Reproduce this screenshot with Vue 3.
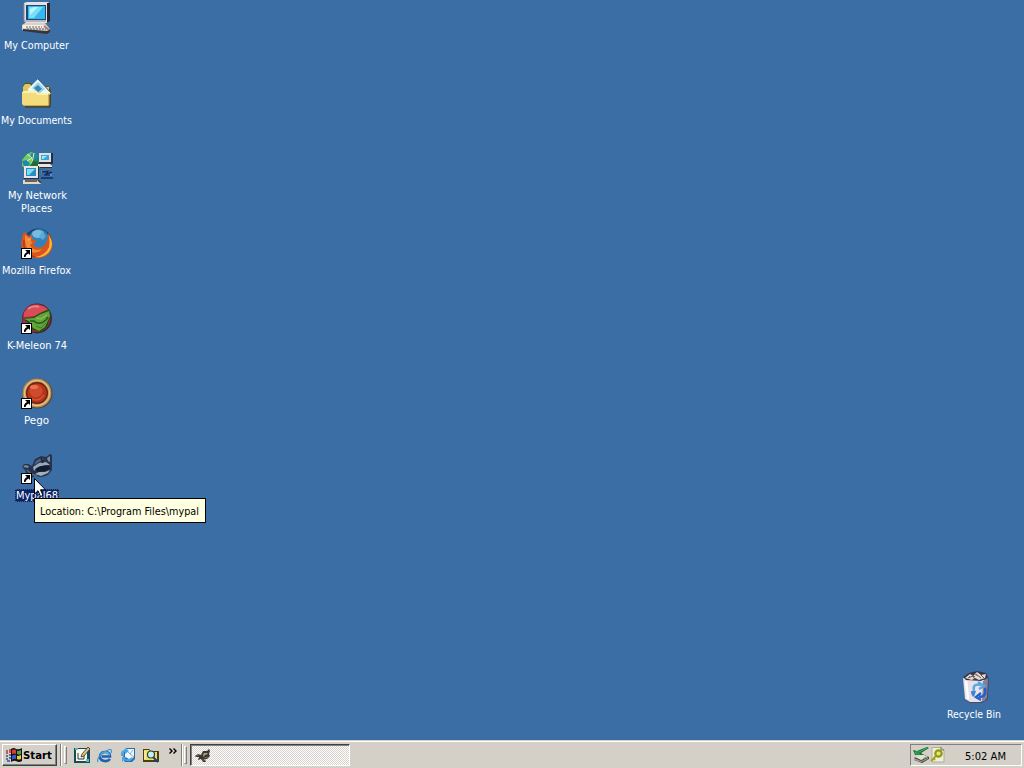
<script setup>
const icons = [
  { id: 'computer', lines: [{ t: 'My Computer', w: 65 }] },
  { id: 'documents', lines: [{ t: 'My Documents', w: 71 }] },
  { id: 'network', lines: [{ t: 'My Network', w: 59 }, { t: 'Places', w: 31 }], nudge: true },
  { id: 'firefox', lines: [{ t: 'Mozilla Firefox', w: 69 }], shortcut: true },
  { id: 'kmeleon', lines: [{ t: 'K-Meleon 74', w: 60 }], shortcut: true, nudge: true },
  { id: 'pego', lines: [{ t: 'Pego', w: 25 }], shortcut: true },
  { id: 'mypal', lines: [{ t: 'Mypal68', w: 42 }], shortcut: true, selected: true, nudge: true },
]
</script>

<template>
  <div class="screen">
    <main class="desktop">
      <div class="column">
        <div v-for="icon in icons" :key="icon.id" class="item" :class="{ selected: icon.selected, nudge: icon.nudge }">
          <svg class="glyph" :viewBox="icon.shortcut ? '0 -1 32 32' : '0 0 32 32'">
            <g v-if="icon.id === 'computer'">
              <path d="M3 1L6 0H27L29 2V18L26 21H5L3 19Z" fill="#e6e0e0" />
              <path d="M26 1H29V19L26 21Z" fill="#292631" />
              <path d="M3 2V19H25" fill="none" stroke="#8c8795" stroke-width="1" />
              <path d="M5 3H25V18H5Z" fill="#174b76" />
              <path d="M7 4H24V17H7Z" fill="#36b7ef" />
              <path d="M8 5H22L13 16H8Z" fill="#7cdef5" />
              <path d="M9 7L13 5H17L9 13Z" fill="#baf4ff" />
              <path d="M9 21H23V23H9Z" fill="#4d4850" />
              <path d="M1 23L4 21H24L29 27V29L26 31L1 28Z" fill="#d9d0c9" />
              <path d="M2 23H22L25 26H2Z" fill="#f7efe5" />
              <path d="M2 27L26 29L29 27V30L26 32L2 29Z" fill="#37333c" />
              <path d="M5 25H21M6 27H25" stroke="#65606a" stroke-dasharray="2 1" />
              <path d="M23 24L28 28" stroke="#a98264" stroke-width="2" />
            </g>
            <g v-else-if="icon.id === 'documents'">
              <path d="M2 9L4 6H10L12 9H27L30 12V27L28 30H3Z" fill="#5f501b" />
              <path d="M2 10L4 7H9L11 10H28V28H2Z" fill="#e1c85a" />
              <path d="M7 12L17 2L30 16L24 22H8Z" fill="#e8f8fc" />
              <path d="M17 2L30 16" stroke="#325e83" />
              <path d="M11 11L17 5L24 12L18 17Z" fill="#9ed3ea" />
              <path d="M13 11L17 8L21 12L17 15Z" fill="#3787b6" />
              <path d="M1 15L3 14H15L17 16H29V28L27 29H3L1 27Z" fill="#f2dc7c" />
              <path d="M2 15H15L17 17H28" fill="none" stroke="#fff7b4" stroke-width="1.5" />
              <path d="M3 29H28V17" fill="none" stroke="#a17b25" />
              <path d="M4 30H29V18" fill="none" stroke="#31322b" />
            </g>
            <g v-else-if="icon.id === 'network'">
              <circle cx="11" cy="11" r="10.5" fill="#1d8274" />
              <path d="M5 3L10 0L15 2L10 6L14 9L8 14L7 19L1 14V8Z" fill="#72c968" />
              <path d="M10 1L18 3L14 8L9 6ZM1 9L6 8L9 12L4 17Z" fill="#2486aa" />
              <path d="M6 2L11 6L6 9M13 1L11 11" fill="none" stroke="#dbf8ac" />
              <path d="M12 8L18 11L16 14H10Z" fill="#246a35" />
              <path d="M18 1H32V12H18Z" fill="#262c43" />
              <path d="M18 1H30V10H18Z" fill="#e3deda" />
              <path d="M20 3H28V8H20Z" fill="#34a8da" />
              <path d="M21 4H26L22 7H21Z" fill="#a2edf7" />
              <path d="M17 12H29L31 14V15H17Z" fill="#eee4d7" />
              <path d="M19 15.5H31" stroke="#30303b" />
              <path d="M3 14H18V27H3Z" fill="#283044" />
              <path d="M3 14H17V26H3Z" fill="#ede4df" />
              <path d="M5 16H15V24H5Z" fill="#278fbd" />
              <path d="M6 17H14L8 23H6Z" fill="#7cdef3" />
              <path d="M2 28H16L20 31V32H2Z" fill="#e6d6c0" />
              <path d="M4 29H16M17 28L20 31" stroke="#423c3e" stroke-width="1.5" />
              <path d="M20 20L28 18L24 23H31" fill="none" stroke="#7eaad4" />
              <path d="M21 20L27 19L25 22L31 20M20 26H32M23 23H29" fill="none" stroke="#172c5e" stroke-width="1.4" />
            </g>
            <g v-else-if="icon.id === 'firefox'">
              <circle cx="17" cy="14.5" r="14" fill="#1a4378" />
              <circle cx="18" cy="11" r="10" fill="#2f83bd" />
              <ellipse cx="17" cy="6" rx="6" ry="4" fill="#79bbdf" />
              <path d="M21 4L25 8L22 12L18 9Z" fill="#5ca9d4" />
              <path d="M3 4L8 8L12 7L10 11L14 12L16 14L12 16Q15 21 21 19Q27 16 27 5Q34 14 30 23Q25 31 15 30Q4 30 1 21Q-1 12 3 4Z" fill="#d9551c" />
              <path d="M28 7Q34 17 28 24Q23 30 15 29Q25 27 28 19Q29 14 28 7Z" fill="#f8b83c" />
              <path d="M4 7L8 10L11 9L8 13L12 14L9 17Q12 24 21 21Q17 26 10 24Q3 20 4 7Z" fill="#f18c35" />
              <path d="M3 12Q1 26 14 29" fill="none" stroke="#9e301f" />
              <path d="M7 12L10 12" stroke="#f3c687" />
            </g>
            <g v-else-if="icon.id === 'kmeleon'">
              <circle cx="16" cy="15.5" r="15" fill="#3f262c" />
              <circle cx="15.5" cy="15" r="14" fill="#a52d3b" />
              <path d="M3 10Q8 1 17 2Q25 3 28 8L15 13L3 14Z" fill="#d94d58" />
              <path d="M7 6Q12 2 18 4" fill="none" stroke="#e98588" stroke-width="2" />
              <path d="M2 16L12 14L19 10L28 6L30 12L26 24L20 29L12 27L7 20Z" fill="#254d18" />
              <path d="M3 16L13 15L20 11L28 8L29 13L24 24L18 28L12 25L8 18Z" fill="#62a638" />
              <path d="M9 18L13 18Q18 23 25 17L27 14" fill="none" stroke="#275b20" stroke-width="1.6" />
              <path d="M15 23L20 25L25 20" fill="none" stroke="#447d27" />
              <path d="M15 15L20 16L26 12" fill="none" stroke="#83bd50" stroke-width="1.5" />
            </g>
            <g v-else-if="icon.id === 'pego'">
              <circle cx="16.5" cy="15.5" r="15" fill="#554130" />
              <circle cx="16" cy="15" r="14.5" fill="#b98b52" />
              <circle cx="16" cy="15" r="12.5" fill="none" stroke="#e2bf86" stroke-width="1.4" />
              <circle cx="16" cy="15" r="11" fill="#642113" />
              <circle cx="16" cy="15" r="9.8" fill="#b83217" />
              <circle cx="15" cy="13" r="6.5" fill="#d04b2b" />
              <ellipse cx="13" cy="9" rx="4" ry="2" fill="#e37755" />
              <path d="M10 20Q17 25 23 17" fill="none" stroke="#cf5935" stroke-width="1.5" />
            </g>
            <g v-else transform="translate(0 1)">
              <path d="M1 13L3 10L7 10L11 12L14 5L20 2L25 3L29 0L31 1V9L31 16L27 21L21 23L14 22L10 24L5 19L4 16Z" fill="#26334c" />
              <path d="M2 13L4 11L8 12L7 14ZM26 4L29 2V8L27 7Z" fill="#7889a3" />
              <path d="M15 7L20 4L23 5L18 8L13 11Z" fill="#536580" />
              <path d="M12 13L18 9L25 8L29 11L24 11L17 13L13 17Z" fill="#98a8b9" />
              <path d="M14 15L20 12L28 12L29 15L24 17L17 18Z" fill="#101b30" />
              <path d="M14 20L18 18L24 18L29 16L27 19L20 22Z" fill="#a2afbd" />
              <path d="M6 16L10 20L16 22" fill="none" stroke="#566985" stroke-width="1.5" />
              <path d="M20 4L22 9" stroke="#17243a" stroke-width="1.5" />
            </g>
            <g v-if="icon.shortcut">
              <rect x="0.5" y="20.5" width="10" height="10" fill="#fff" stroke="#000" />
              <path d="M4 22H9V27L7.5 25.5Q4.8 26.5 4.5 29H3Q2.5 26 6 24Z" fill="#000" />
            </g>
          </svg>
          <div class="label">
            <svg v-for="line in icon.lines" :key="line.t" class="caption" :width="line.w" height="13">
              <text x="0" y="10" :textLength="line.w" lengthAdjust="spacingAndGlyphs">{{ line.t }}</text>
            </svg>
          </div>
        </div>
      </div>

      <div class="item recycle">
        <svg class="glyph" viewBox="-2 0 32 32">
          <path d="M3 6L28 6L27 28L21 32H9L4 29Z" fill="#4a4967" />
          <path d="M2 7L24 9V29L19 31H9L4 28Z" fill="#e7e1e8" />
          <path d="M22 10L27 7L26 27L21 31Z" fill="#85809a" />
          <path d="M5 10L7 28" stroke="#fff" stroke-width="2.5" />
          <path d="M2 6L8 2L16 0L25 2L27 6L20 10L5 9Z" fill="#373545" />
          <path d="M4 7L9 3L12 5L16 1L20 4L25 3L24 7L18 9L14 7L11 9Z" fill="#e6ddda" />
          <path d="M7 7L12 5L14 9M15 3L20 7M20 4L23 7M10 3L14 6" fill="none" stroke="#5d5359" />
          <path d="M13 3L17 5M9 5L7 7" stroke="#9e7359" />
          <path d="M13 20Q11 12 20 14M17 11L23 15L18 18" fill="none" stroke="#58a8e2" stroke-width="2.4" />
          <path d="M24 17Q26 26 18 26M20 22L15 26L20 29" fill="none" stroke="#2360c8" stroke-width="2.4" />
          <path d="M10 20L15 20L13 26Q10 25 10 20Z" fill="#3f83d7" />
        </svg>
        <div class="label">
          <svg class="caption" width="54" height="13"><text x="0" y="10" textLength="54" lengthAdjust="spacingAndGlyphs">Recycle Bin</text></svg>
        </div>
      </div>

      <svg class="cursor" viewBox="0 0 12 20">
        <path d="M.5 .5V16L4 12.7L6.5 18.5L9 17.4L6.5 11.8H11.5Z" fill="#fff" stroke="#000" />
      </svg>
      <div class="tooltip">
        <svg class="caption" width="159" height="14"><text x="0" y="11" textLength="159" lengthAdjust="spacingAndGlyphs">Location: C:\Program Files\mypal</text></svg>
      </div>
    </main>

    <footer class="taskbar">
      <button class="start">
        <svg width="16" height="16" viewBox="0 0 16 16">
          <path d="M5 2Q8 0 10 2Q13 3 16 1V14Q13 16 10 14Q8 13 5 15Z" fill="#15111a" />
          <path d="M6 3Q8 2 10 3V7Q8 6 6 7Z" fill="#dd3e29" />
          <path d="M11 4Q13 4 15 3V7Q13 8 11 7Z" fill="#51a343" />
          <path d="M6 9Q8 7 10 8V12Q8 11 6 13Z" fill="#355bc5" />
          <path d="M11 9Q13 9 15 8V12Q13 13 11 12Z" fill="#e8ce37" />
          <path d="M0 4H2M3 3H5M0 6H2M3 5H5" stroke="#b5383b" stroke-width="1.3" />
          <path d="M0 9H2M3 8H5M0 12H2M3 11H5M1 14H4" stroke="#334fa3" stroke-width="1.3" />
        </svg>
        <svg class="caption bold" width="29" height="14"><text x="1" y="11" textLength="29" lengthAdjust="spacingAndGlyphs">Start</text></svg>
      </button>
      <i class="sep"></i><i class="grip"></i>
      <div class="quick">
        <svg width="16" height="16" viewBox="0 0 16 16">
          <path d="M0 1H16V16H0Z" fill="#174d59" />
          <path d="M2 2H13V14H2Z" fill="#f9fbea" />
          <path d="M1 1H4V3H1ZM12 12H15V15H12Z" fill="#58b9b7" />
          <path d="M4 6V12H10V8" fill="none" stroke="#333" />
          <path d="M7 10L8 7L14 0L16 2L10 9Z" fill="#e1c179" stroke="#333" stroke-width=".8" />
        </svg>
        <svg width="16" height="16" viewBox="0 0 16 16">
          <path d="M13 12Q11 14.5 7.5 14Q3 13.5 3 9.5Q3.5 5 8 5Q13 5 13 9.5H5" fill="none" stroke="#1c62b3" stroke-width="2.6" />
          <path d="M3.5 9Q4 5 8.5 5Q12 5.5 12.5 8.5" fill="none" stroke="#55b6ea" stroke-width="1.3" />
          <path d="M1 15Q-1 12 6 6Q13 1 14 3Q15 4 14 6" fill="none" stroke="#4796d7" stroke-width="1.2" />
        </svg>
        <svg width="16" height="16" viewBox="0 0 16 16">
          <path d="M4 3L7 1H15V12L12 15H5L3 12Z" fill="#276bb3" />
          <path d="M5 3L8 2H14V10L11 13L5 10Z" fill="#eaf7fb" />
          <path d="M7 4L10 7L13 3M10 7L14 10" fill="none" stroke="#8daac1" />
          <path d="M1 9Q0 3 5 3V1L9 4L5 7V5Q3 5 3 9ZM2 10L7 10L5 12Q9 13 12 10L13 12Q9 16 4 13L2 15Z" fill="#4aa6df" />
        </svg>
        <svg width="16" height="16" viewBox="0 0 16 16">
          <path d="M0 2H6L8 4H16V15H0Z" fill="#464019" />
          <path d="M1 3H6L8 5H14V13H1Z" fill="#eddc63" />
          <circle cx="8" cy="7.5" r="3.5" fill="#c2f1f3" stroke="#273c46" stroke-width="1.2" />
          <path d="M10 10L15 15" stroke="#223c76" stroke-width="2" />
          <path d="M2 4V12" stroke="#fff9b5" />
        </svg>
      </div>
      <svg class="chevrons" width="8" height="7" viewBox="0 0 8 7"><path d="M.5 .5L3 3L.5 5.5M4.5 .5L7 3L4.5 5.5" fill="none" stroke="#000" stroke-width="1.4" /></svg>
      <i class="sep second"></i><i class="grip close"></i>
      <button class="task">
        <svg width="16" height="16" viewBox="0 0 16 16">
          <path d="M0 8L3 6L6 7L8 3L12 3L14 1L15 3L14 6L15 8L12 11H9L11 14H8L6 11L3 12L4 9L1 9Z" fill="#3b372c" />
          <path d="M8 7L9 5L12 5L13 6L10 7L8 9Z" fill="#aaa291" />
          <path d="M1 8L4 7M7 12H11M9 10L13 9" stroke="#6d6756" />
        </svg>
      </button>
      <div class="tray">
        <svg width="17" height="16" viewBox="0 0 17 16">
          <path d="M1 11L9 7L16 10V12L9 16L1 13Z" fill="#454641" />
          <path d="M2 10L9 7L15 10L8 13Z" fill="#e3e1d6" />
          <path d="M1 11L8 14L15 11V12L8 15L1 13Z" fill="#a6a69b" />
          <path d="M14 0L16 1L8 6L11 8L2 8L0 3L4 4Z" fill="#176d38" />
          <path d="M14 1L6 5L2 5L3 7H7" fill="none" stroke="#46b763" />
          <path d="M10 12L13 10" stroke="#4eb642" />
        </svg>
        <svg width="15" height="16" viewBox="0 0 15 16">
          <path d="M2 .5H11L14 3V15H2Z" fill="#eeeeda" stroke="#b0b092" />
          <path d="M11 0V3H14" fill="none" stroke="#737452" />
          <circle cx="8.5" cy="6.5" r="3.2" fill="#e3e775" stroke="#939817" stroke-width="2.2" />
          <path d="M6 9L1 14M3 11L5 13" fill="none" stroke="#a3a51d" stroke-width="2" />
        </svg>
        <svg class="caption clock" width="41" height="14"><text x="0" y="11" textLength="41" lengthAdjust="spacingAndGlyphs">5:02 AM</text></svg>
      </div>
    </footer>
  </div>
</template>

<style>
body { margin: 0; overflow: hidden; background: #3b6ea5; }
</style>

<style scoped>
.screen {
  width: 1024px;
  height: 768px;
  display: flex;
  flex-direction: column;
  font-family: "DejaVu Sans Condensed", "DejaVu Sans", sans-serif;
  font-size: 11px;
  overflow: hidden;
}
.desktop { position: relative; flex: 1; background: #3b6ea5; }
.column { width: 73px; padding-top: 2px; }
.item {
  width: 73px;
  height: 75px;
  display: flex;
  flex-direction: column;
  align-items: center;
}
.glyph { width: 32px; height: 32px; display: block; flex: none; margin-left: 1px; overflow: visible; }
.label {
  display: flex;
  flex-direction: column;
  align-items: center;
  margin: 5px 1px 0 0;
  padding: 0 1px;
}
.nudge .label { margin: 5px 0 0 1px; }
.caption { display: block; flex: none; overflow: visible; fill: #fff; }
.caption + .caption { margin-right: 2px; }
.selected .label { background: #0a246a; outline: 1px dotted #46517a; outline-offset: -1px; }
.recycle { position: absolute; left: 938px; top: 671px; height: 66px; }
.cursor { position: absolute; left: 34px; top: 478px; width: 12px; height: 20px; }
.tooltip {
  position: absolute;
  left: 34px;
  top: 498px;
  width: 172px;
  height: 25px;
  box-sizing: border-box;
  border: 1px solid #000;
  background: #ffffe1;
  padding: 5px;
}
.tooltip .caption, .taskbar .caption { fill: #000; }
.taskbar {
  height: 28px;
  box-sizing: border-box;
  display: flex;
  align-items: center;
  background: #d4d0c8;
  border-top: 1px solid #d4d0c8;
  box-shadow: inset 0 1px #fff;
  padding: 2px 2px 1px;
}
button { font: inherit; border-radius: 0; margin: 0; }
.start {
  width: 55px;
  height: 22px;
  box-sizing: border-box;
  display: flex;
  align-items: center;
  gap: 0;
  padding: 0 0 0 3px;
  background: #d4d0c8;
  border: 1px solid;
  border-color: #fff #404040 #404040 #fff;
  box-shadow: inset -1px -1px #808080;
}
.bold { font-weight: bold; }
.sep {
  width: 1px;
  height: 22px;
  margin-left: 3px;
  background: #808080;
  border-right: 1px solid #fff;
}
.grip {
  width: 3px;
  height: 18px;
  margin-left: 2px;
  box-sizing: border-box;
  border: 1px solid;
  border-color: #fff #808080 #808080 #fff;
}
.grip.close { margin-left: 1px; }
.quick { display: flex; gap: 7px; margin-left: 7px; }
.chevrons { margin: -8px 0 0 10px; }
.second { margin-left: 4px; }
.task {
  width: 160px;
  height: 22px;
  box-sizing: border-box;
  margin-left: 3px;
  padding: 1px 0 0 4px;
  display: flex;
  align-items: center;
  border: 1px solid;
  border-color: #404040 #fff #fff #404040;
  box-shadow: inset 1px 1px #808080;
  background: repeating-conic-gradient(#fff 0 25%, #d8d0cc 0 50%) 0 0 / 2px 2px;
}
.tray {
  width: 112px;
  height: 22px;
  box-sizing: border-box;
  margin-left: auto;
  padding-left: 2px;
  display: flex;
  align-items: center;
  border: 1px solid;
  border-color: #808080 #fff #fff #808080;
}
.clock { margin: 2px 0 0 20px; }
</style>
